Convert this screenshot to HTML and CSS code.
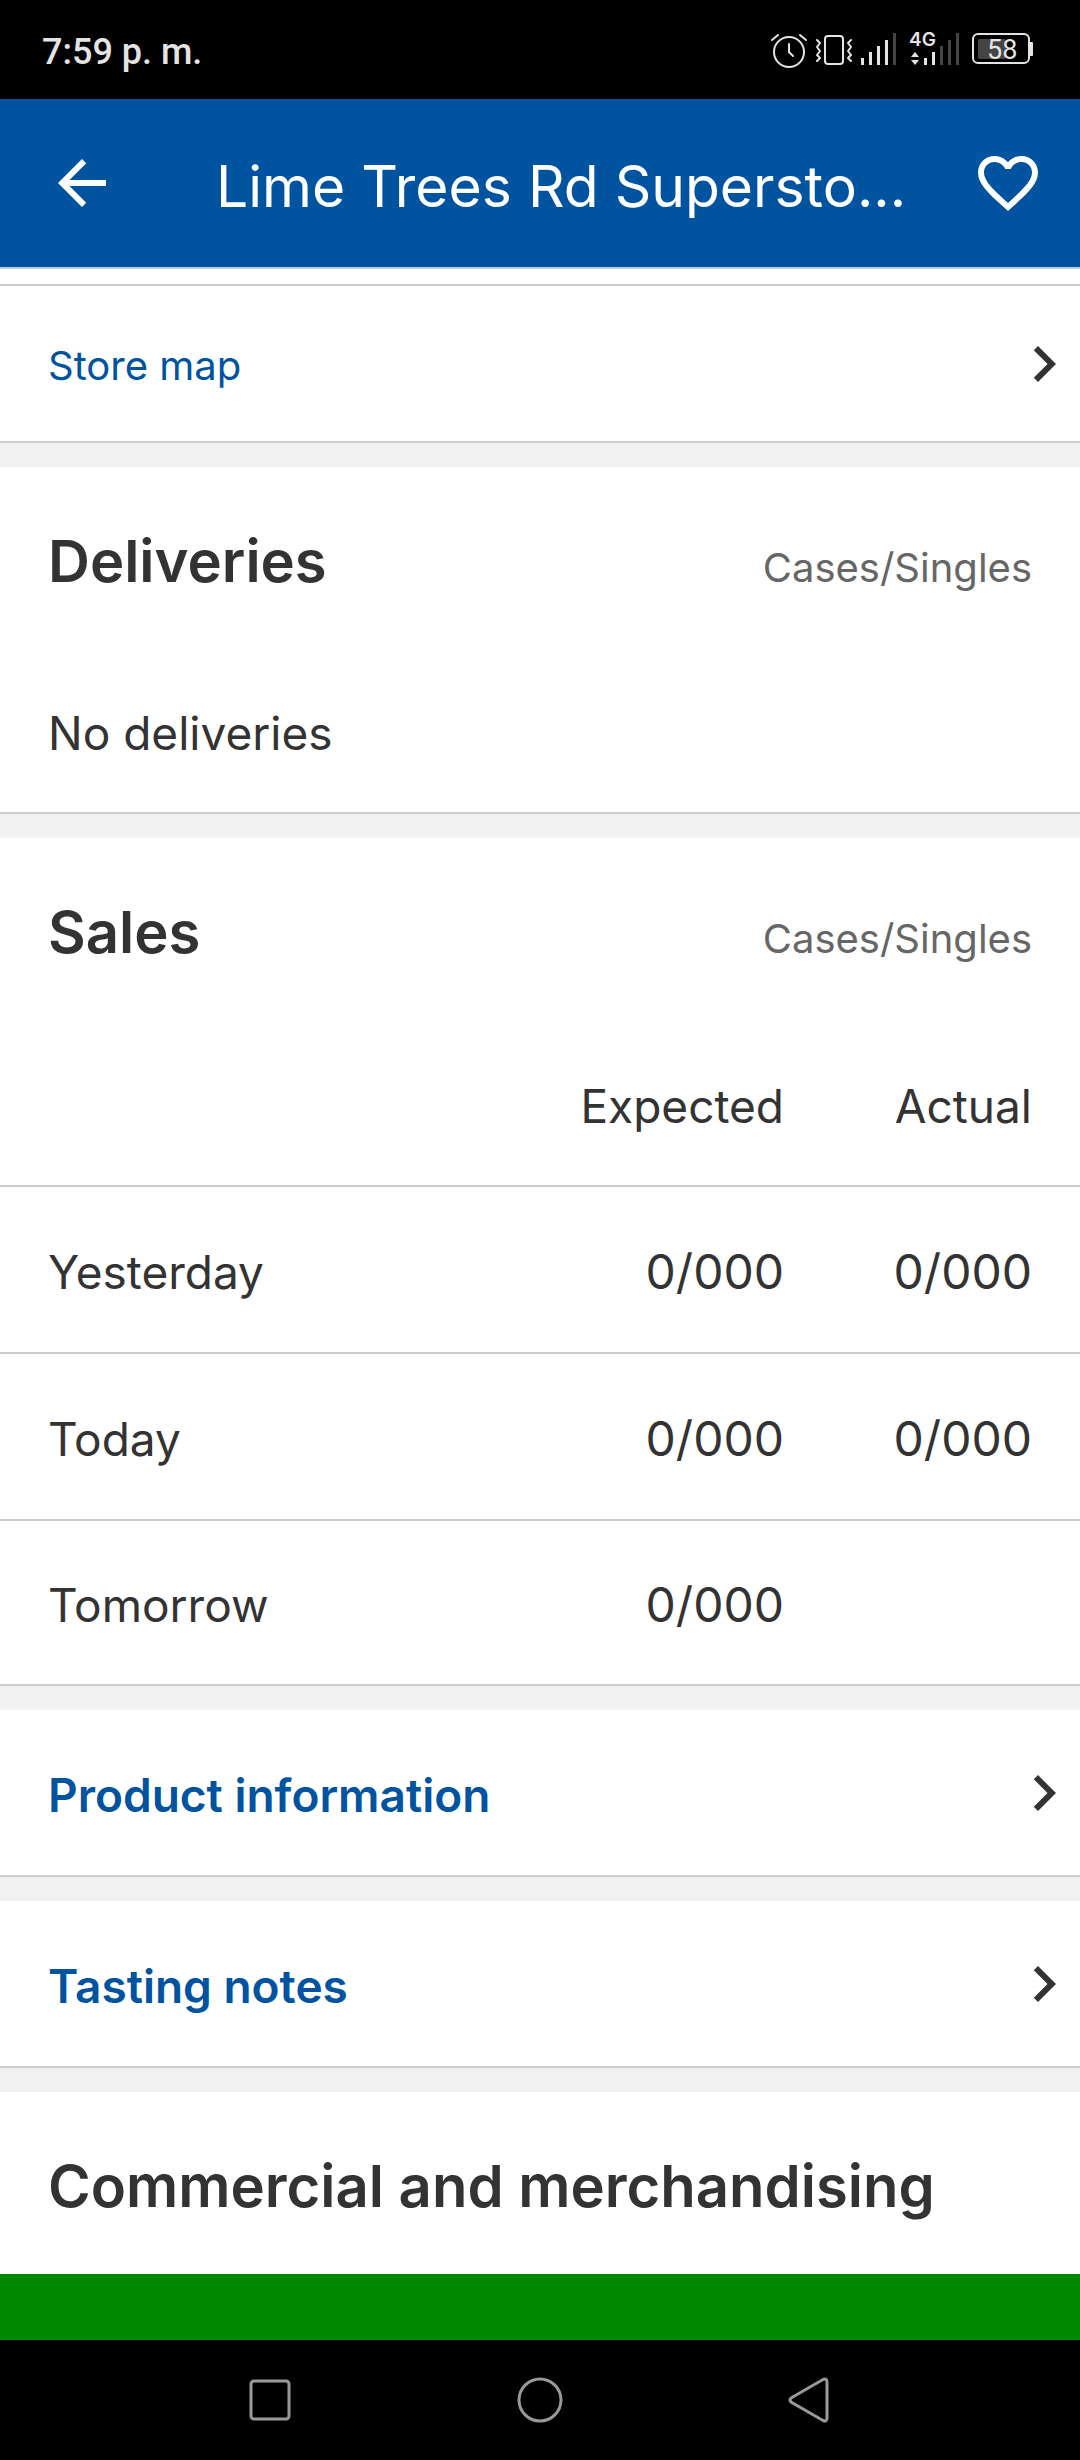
FILE: index.html
```html
<!DOCTYPE html>
<html lang="en">
<head>
<meta charset="utf-8">
<meta name="viewport" content="width=device-width, initial-scale=1">
<title>Lime Trees Rd Superstore</title>
<link rel="stylesheet" href="styles.css">
</head>
<body>
<div class="status-bar">
  <span class="status-time">7:59 p. m.</span>
  <div class="status-icons">
    <svg width="38" height="59" viewBox="770 20 38 59" fill="none" stroke="#e4e4e4" stroke-width="2" stroke-linecap="round" aria-label="Alarm set">
      <circle cx="789" cy="52" r="15"/>
      <path d="M789 44v8l4 4M772 40l6-5M806 40l-6-5"/>
    </svg>
    <svg width="40" height="59" viewBox="814 20 40 59" fill="none" stroke="#e4e4e4" stroke-width="2" stroke-linecap="round" stroke-linejoin="round" aria-label="Vibrate">
      <rect x="825" y="36" width="18" height="28" rx="3"/>
      <path d="M817 40l3 3-3 4 3 4-3 4 3 3-3 3M851 40l-3 3 3 4-3 4 3 4-3 3 3 3"/>
    </svg>
    <svg width="38" height="59" viewBox="860 20 38 59" fill="none" stroke="#e4e4e4" stroke-width="3" aria-label="Signal">
      <path d="M862.5 58v7M870.5 52v13M878.5 46v19M886.5 40v25"/>
      <path stroke="#444" d="M894.5 33v32"/>
    </svg>
    <svg width="56" height="59" viewBox="904 20 56 59" fill="none" stroke="#e4e4e4" stroke-width="3" aria-label="4G signal">
      <text class="network" x="909" y="46" stroke="none">4G</text>
      <path stroke="none" fill="#e4e4e4" d="M911 57l4-5 4 5zM911 60l4 5 4-5z"/>
      <path d="M925.5 58v7M933.5 52v13"/>
      <path stroke="#444" d="M941.5 46v19M949.5 40v25M957.5 33v32"/>
    </svg>
    <svg width="68" height="59" viewBox="966 20 68 59" fill="none" aria-label="Battery 58 percent">
      <rect x="973" y="34" width="56" height="29" rx="5" stroke="#e4e4e4" stroke-width="2"/>
      <rect x="978" y="39" width="28" height="20" rx="2" fill="#444"/>
      <rect x="1029" y="42" width="4" height="14" rx="1" fill="#e4e4e4"/>
      <text class="charge" x="987" y="59">58</text>
    </svg>
  </div>
</div>

<header class="app-bar">
  <button class="app-bar-button back" type="button" aria-label="Back">
    <svg width="72" height="72" viewBox="0 0 24 24" fill="currentColor"><path d="M20 11H7.83l5.59-5.59L12 4l-8 8 8 8 1.41-1.41L7.83 13H20z"/></svg>
  </button>
  <h1 class="app-bar-title">Lime Trees Rd Supersto...</h1>
  <button class="app-bar-button favourite" type="button" aria-label="Add to favourites">
    <svg width="72" height="72" viewBox="0 0 24 24" fill="currentColor"><path d="M16.5 3c-1.74 0-3.41.81-4.5 2.09C10.91 3.81 9.24 3 7.5 3 4.42 3 2 5.42 2 8.5c0 3.78 3.4 6.86 8.55 11.54L12 21.35l1.45-1.32C18.6 15.36 22 12.28 22 8.5 22 5.42 19.58 3 16.5 3zm-4.4 15.55l-.1.1-.1-.1C7.14 14.24 4 11.39 4 8.5 4 6.5 5.5 5 7.5 5c1.54 0 3.04.99 3.57 2.36h1.87C13.46 5.99 14.96 5 16.5 5c2 0 3.5 1.5 3.5 3.5 0 2.89-3.14 5.74-7.9 10.05z"/></svg>
  </button>
</header>

<main class="content">
  <section class="panel store">
    <a class="row-link small" href="#map"><span>Store map</span>
      <svg width="72" height="72" viewBox="0 0 24 24" aria-hidden="true"><path d="M10 6L8.59 7.41 13.17 12l-4.58 4.59L10 18l6-6z"/></svg></a>
  </section>

  <section class="panel">
    <div class="panel-head"><h2>Deliveries</h2><span class="unit">Cases/Singles</span></div>
    <p class="empty">No deliveries</p>
  </section>

  <section class="panel">
    <div class="panel-head"><h2>Sales</h2><span class="unit">Cases/Singles</span></div>
    <table class="sales">
      <thead>
        <tr><td></td><th scope="col">Expected</th><th class="actual" scope="col">Actual</th></tr>
      </thead>
      <tbody>
        <tr><th scope="row">Yesterday</th><td>0/000</td><td>0/000</td></tr>
        <tr><th scope="row">Today</th><td>0/000</td><td>0/000</td></tr>
        <tr><th scope="row">Tomorrow</th><td>0/000</td><td></td></tr>
      </tbody>
    </table>
  </section>

  <section class="panel">
    <a class="row-link" href="#product"><span>Product information</span>
      <svg width="72" height="72" viewBox="0 0 24 24" aria-hidden="true"><path d="M10 6L8.59 7.41 13.17 12l-4.58 4.59L10 18l6-6z"/></svg></a>
  </section>

  <section class="panel">
    <a class="row-link" href="#tasting"><span>Tasting notes</span>
      <svg width="72" height="72" viewBox="0 0 24 24" aria-hidden="true"><path d="M10 6L8.59 7.41 13.17 12l-4.58 4.59L10 18l6-6z"/></svg></a>
  </section>

  <section class="panel last">
    <div class="panel-head"><h2>Commercial and merchandising</h2></div>
  </section>
</main>

<div class="stock-banner"></div>

<nav class="system-nav" aria-label="System">
  <button type="button" aria-label="Recent apps"><svg width="48" height="48" viewBox="0 0 48 48"><rect x="5" y="5" width="38" height="38" rx="3"/></svg></button>
  <button type="button" aria-label="Home"><svg width="48" height="48" viewBox="0 0 48 48"><circle cx="24" cy="24" r="21"/></svg></button>
  <button type="button" aria-label="Back"><svg width="48" height="48" viewBox="0 0 48 48"><path d="M5 22L37 3.5Q41 2 41 6v36q0 4-4 2.5L5 26q-2-2 0-4z"/></svg></button>
</nav>
</body>
</html>
```
FILE: styles.css
```css
* { box-sizing: border-box; }

body {
  margin: 0;
  min-height: 100vh;
  display: flex;
  flex-direction: column;
  background: #fff;
  color: #333;
  font: 400 46px/56px Inter, "Liberation Sans", sans-serif;
}

h1, h2, p { margin: 0; }

button {
  display: flex;
  align-items: center;
  justify-content: center;
  padding: 0;
  border: 0;
  background: none;
  color: inherit;
}

svg { display: block; flex: none; }

/* Phone status bar */
.status-bar {
  display: flex;
  align-items: center;
  justify-content: space-between;
  height: 99px;
  padding: 0 46px 0 42px;
  background: #000;
  color: #e4e4e4;
}

.status-time { font: 500 36px/42px Roboto, sans-serif; padding-top: 4px; }
.status-icons { display: flex; gap: 6px; }
.network { font: 600 19px Inter, sans-serif; fill: #e4e4e4; }
.charge { font: 400 27px Roboto, sans-serif; fill: #e4e4e4; }

/* App bar */
.app-bar {
  display: flex;
  align-items: stretch;
  height: 170px;
  background: #00539f;
  border-bottom: 2px solid #b9cde4;
  color: #fff;
}

.back { width: 164px; }
.favourite { width: 144px; }

.app-bar-title {
  flex: 1;
  min-width: 0;
  align-self: center;
  padding: 8px 0 0 52px;
  overflow: hidden;
  white-space: nowrap;
  font-size: 57px;
  font-weight: 400;
  line-height: 70px;
}

/* Panels */
.content { flex: 1; padding-top: 15px; }

.panel {
  border-bottom: 2px solid #ccc;
  box-shadow: 0 24px 0 #f1f1f1;
  margin-bottom: 24px;
}

.store { border-top: 2px solid #ccc; }
.last { border: 0; box-shadow: none; margin: 0; }

.panel-head {
  display: flex;
  align-items: baseline;
  justify-content: space-between;
  padding: 59px 48px 52px;
}

h2 { font-size: 58px; font-weight: 600; line-height: 70px; }
.unit { font-size: 40px; line-height: 48px; color: #666; }
.empty { padding: 57px 48px 51px; }

.row-link {
  display: flex;
  align-items: center;
  justify-content: space-between;
  color: #00539f;
  font-weight: 600;
  text-decoration: none;
}

.row-link span { padding: 57px 0 52px 48px; }
.row-link svg { fill: #333; }
.row-link.small { font-size: 40px; line-height: 48px; font-weight: 400; }
.row-link.small span { padding: 56px 0 51px 48px; }

/* Sales table */
.sales { width: 100%; border-collapse: separate; border-spacing: 0; }

.sales th,
.sales td {
  padding: 57px 0 52px;
  border-bottom: 2px solid #ccc;
  font-weight: 400;
  text-align: right;
}

.sales thead th { padding: 59px 0 51px; }
.sales tbody td { font-size: 48px; }
.sales tr > :first-child { padding-left: 48px; text-align: left; }
.sales tr > :last-child { padding-right: 48px; }
.sales .actual { width: 296px; }
.sales tbody tr:last-child > * { padding-top: 56px; padding-bottom: 51px; border-bottom: 0; }

.stock-banner { height: 66px; background: #008800; }

/* Phone navigation bar */
.system-nav {
  display: flex;
  height: 120px;
  padding: 0 12.5%;
  background: #000;
}

.system-nav button { flex: 1; }
.system-nav svg { fill: none; stroke: #999; stroke-width: 3; }
```
